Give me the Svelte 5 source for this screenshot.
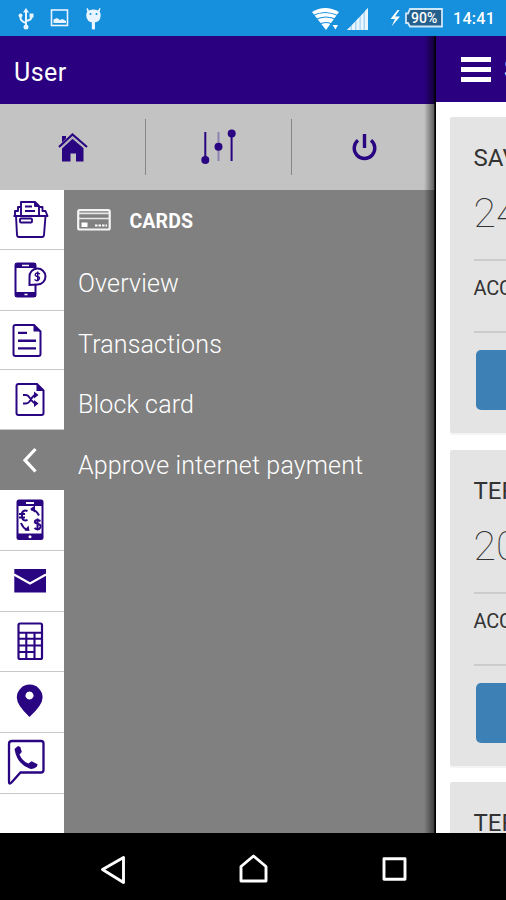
<script>
  const menu = ['Overview', 'Transactions', 'Block card', 'Approve internet payment'];
  const cards = [
    { title: 'SAVINGS', amount: '24' },
    { title: 'TERM', amount: '20' },
    { title: 'TERM', amount: '20' }
  ];
  const rail = [
    { id: 'folder', y: 190, h: 60 },
    { id: 'pay', y: 250, h: 61 },
    { id: 'doc', y: 311, h: 59 },
    { id: 'shuffle', y: 370, h: 60 },
    { id: 'back', y: 430, h: 60 },
    { id: 'exchange', y: 490, h: 61 },
    { id: 'mail', y: 551, h: 61 },
    { id: 'calc', y: 612, h: 60 },
    { id: 'pin', y: 672, h: 61 },
    { id: 'call', y: 733, h: 61 }
  ];
</script>

<div class="screen">
  <div class="status">
    <svg width="506" height="36" viewBox="0 0 506 36">
      <g stroke="#e8f4ff" fill="none" stroke-width="2">
        <path d="M26 11v16M20.500 15v3q0 3 5.500 5M31.500 15v2q0 3-5.500 4" />
        <rect x="51.500" y="10" width="16" height="15.500" stroke-width="1.600" />
      </g>
      <g fill="#e8f4ff">
        <path d="M26 8l3 4.500h-6z" /><circle cx="26" cy="27" r="2.500" />
        <circle cx="20.500" cy="15.500" r="2" /><rect x="29.500" y="13.500" width="4" height="4" />
        <path d="M53.500 23v-3.500l3.500-1.500 3 2 2.500-1 3.500 2v2z" />
        <path d="M87.500 8l1.500 2.500q4.500-2 9 0L99.500 8l1 .5-.8 3.200q1 1.800 1 3.800-.3 7-7.200 7-7-.2-7.300-7 0-2 1-3.800L86.500 8.500z" />
        <rect x="91.800" y="21" width="3.200" height="8.500" rx="1.200" />
      </g>
      <circle cx="90.500" cy="14" r="1" fill="#168fdc" /><circle cx="96.500" cy="14" r="1" fill="#168fdc" />
      <path d="M312 12q13-8 27 0L326 30z" fill="#fff" />
      <path d="M312 16q13-7 27 0M315 20q11-6 22 0M319 24.500q7-4 14 0" fill="none" stroke="#168fdc" stroke-width="1.200" />
      <path d="M331 23h9l-4.500 7.500z" fill="#168fdc" /><path d="M332.500 25h5.500l-2.500 4.500z" fill="#fff" />
      <path d="M347 30L368 8v22z" fill="#a9d5f5" />
      <path d="M347 30h3.500v-3.500zM352 30h3v-8l-3 3zM356.500 30h3V17l-3 3.500zM360.800 30h2.700V13l-2.700 3zM365 30h3V8l-3 3z" fill="#e9f5fd" />
      <path d="M397.500 10l-7 9h4.500l-3.500 7.500 8.500-10h-5l4.500-6.500z" fill="#fff" />
      <path d="M410 9h32v17.500h-32l-2-3.500h-2v-9.500h2z" fill="#25608c" stroke="#cce6fa" stroke-width="1.800" />
    </svg>
    <span class="pct">90%</span>
    <span class="time">14:41</span>
  </div>

  <div class="main">
    <div class="drawer">
      <header>User</header>
      <div class="tools">
        <div class="tool">
          <svg width="145" height="86" viewBox="0 104 145 86">
            <path d="M62 136h4v2.500l-4 4zM62 147l10.500-9.500L83.500 147v14.500h-7.500v-8h-5.500v8H62z" fill="#2a0581" />
            <path d="M59 147l13.500-12.500L87 147" fill="none" stroke="#2a0581" stroke-width="2.200" />
            <path d="M60.500 149l12-10.800L85.500 149" fill="none" stroke="#c3c3c3" stroke-width="1.100" />
          </svg>
        </div>
        <i></i>
        <div class="tool">
          <svg width="145" height="86" viewBox="146 104 145 86">
            <g stroke="#2a0581" stroke-width="2"><path d="M205.300 132v28M231.600 133v28" /><path d="M218.500 132v29" stroke="#8f83ae" /></g>
            <g fill="#2a0581"><circle cx="205.300" cy="160" r="4" /><circle cx="218.500" cy="146.700" r="4" /><circle cx="231.700" cy="133.500" r="4" /></g>
          </svg>
        </div>
        <i></i>
        <div class="tool">
          <svg width="144" height="86" viewBox="292 104 144 86">
            <path d="M364.500 134v14M358 140.200a10.300 10.300 0 1 0 13 0" fill="none" stroke="#2a0581" stroke-width="3.400" />
          </svg>
        </div>
      </div>

      <div class="body">
        <nav>
          {#each rail as r}
            <div class="item" class:active={r.id === 'back'} style="height: {r.h}px">
              <svg width="64" height={r.h} viewBox="0 {r.y} 64 {r.h}">
                {#if r.id === 'folder'}
                  <g fill="none" stroke="#2a0581" stroke-width="1.900" stroke-linejoin="round">
                    <path d="M16 216l1 19q.2 2 2 2h23q1.800 0 2-2l1.500-19zM13.500 216h34l-2-5h-3v-4h-3M15 216v-5h3v-4h3v8M21 215v-13h14l4 4v9M35 202v4h4" />
                    <rect x="20" y="218.500" width="12" height="4" rx="1" />
                    <path d="M25 206.500h7M25 211h10" />
                  </g>
                {:else if r.id === 'pay'}
                  <rect x="15.500" y="263.500" width="20" height="33" rx="2" fill="#fff" stroke="#2a0581" stroke-width="2" />
                  <path d="M15 263h21v5H15zM15 292h21v5H15z" fill="#2a0581" />
                  <path d="M22 265.500h7M24.500 294.500h3" stroke="#fff" stroke-width="1.300" />
                  <path d="M29.500 285v-8a8 8 0 1 1 8 7.500z" fill="#fff" stroke="#2a0581" stroke-width="2" />
                  <path d="M40 274q-3.500-2-4.500 0t2 2.500 1.500 3-4.500 0M37.700 271.500v10" fill="none" stroke="#2a0581" stroke-width="1.400" />
                {:else if r.id === 'doc'}
                  <path d="M15.500 325h18.500l6.500 6.500v22.500q0 2-2 2h-23q-2 0-2-2v-27q0-2 2-2z" fill="none" stroke="#2a0581" stroke-width="2" />
                  <path d="M33.500 324.500v7h7zM18 331.700h9v2.400h-9zM18 339.500h18v2.400H18zM18 347.200h18v2.400H18z" fill="#2a0581" />
                {:else if r.id === 'shuffle'}
                  <path d="M18.500 384H37l6.500 6.500v22.500q0 2-2 2h-23q-2 0-2-2v-27q0-2 2-2z" fill="none" stroke="#2a0581" stroke-width="2" />
                  <path d="M36.500 383.500v7.500h7z" fill="#2a0581" />
                  <path d="M23 395h3q2 0 3.500 2.500l3 4q1.500 2 4 2M23 403.500h3q2 0 3.500-2l3-4.500q1.500-2 4-2" fill="none" stroke="#2a0581" stroke-width="2" />
                  <path d="M34 391.500l4.500 3.500-4.500 3.500zM34 400l4.500 3.500-4.500 3.500z" fill="#2a0581" />
                {:else if r.id === 'back'}
                  <path d="M35.500 449l-10.500 11.200L35.500 471.500" fill="none" stroke="#fff" stroke-width="3.200" />
                {:else if r.id === 'exchange'}
                  <rect x="16.500" y="499.500" width="27" height="40.500" rx="2.500" fill="#2a0581" />
                  <rect x="18.500" y="506" width="23" height="27.500" fill="#fff" />
                  <path d="M26 503h8" stroke="#fff" stroke-width="2" /><circle cx="30" cy="536.700" r="1.500" fill="#fff" />
                  <g fill="none" stroke="#2a0581" stroke-width="2">
                    <path d="M27.500 511q-4-1.500-5.500 2v4.500q1 4 5.500 2.500M19 514h6M19 517.500h6" />
                    <path d="M40.500 521q-4.500-2-5.500 0t3 3 2 4-5.500 0M37.500 518.500v11.500M31 509.500q5 0 8 6M21 523q2 5 6 7" />
                  </g>
                  <path d="M30 509l5-3.500v7zM29.500 531l-5-.5 4-5z" fill="#2a0581" />
                {:else if r.id === 'mail'}
                  <rect x="14.300" y="569" width="31.700" height="23.500" fill="#2a0581" />
                  <path d="M14 574.500l16 9 16-9" fill="none" stroke="#fff" stroke-width="2.200" />
                {:else if r.id === 'calc'}
                  <rect x="18.500" y="623.500" width="23.500" height="35.500" rx="1.500" fill="none" stroke="#2a0581" stroke-width="2.200" />
                  <path d="M18 632.700h24M18 638.800h24M18 645.500h24M18 652h17M26.300 633v26M34.500 633v26" fill="none" stroke="#2a0581" stroke-width="2.100" />
                {:else if r.id === 'pin'}
                  <path fill-rule="evenodd" d="M29.500 717q-12.700-12-12.700-19.500a12.900 12.900 0 0 1 25.800 0q0 7.500-13.100 19.500zM29.500 691.500a4 4 0 1 0 .01 0z" fill="#2a0581" />
                {:else}
                  <path d="M12 741h29q2.500 0 2.500 2.500v26.500q0 2.500-2.500 2.500H20.500l-9 10q-2.500 2.500-2.500-1V744q0-3 3-3z" fill="none" stroke="#2a0581" stroke-width="2.300" />
                  <path d="M14.500 749l3.500-3 2.300 1 1.500 5-2.300 2.500q3 7 9 9l3-2.300 6 3-.5 2.300q-3 3-7 2.300-13-4.500-15.500-19.800z" fill="#2a0581" />
                {/if}
              </svg>
            </div>
          {/each}
        </nav>
        <section>
          <div class="heading">
            <svg width="34" height="22" viewBox="0 0 34 22">
              <rect x="1.200" y="1.200" width="31.500" height="19.300" rx="1.500" fill="none" stroke="#f4f4f4" stroke-width="2.200" />
              <path d="M2 4.300h30M2 9.500h30" stroke="#e6e6e6" stroke-width="1.700" />
              <rect x="4.500" y="13.500" width="6" height="4.500" fill="#fff" />
              <path d="M18 16.500h12" stroke="#fff" stroke-width="2" stroke-dasharray="2.500 1" />
            </svg>
            <b>CARDS</b>
          </div>
          {#each menu as m}<div class="link">{m}</div>{/each}
        </section>
      </div>
    </div>

    <div class="page">
      <div class="bar"><div class="burger"><i></i><i></i><i></i></div><span>SAVINGS</span></div>
      <div class="cards">
        {#each cards as c}
          <article>
            <div class="title">{c.title}</div>
            <div class="amount">{c.amount}</div>
            <div class="acc">ACCOUNT</div>
            <div class="btn"></div>
          </article>
        {/each}
      </div>
    </div>
  </div>

  <footer>
    <svg width="506" height="67" viewBox="0 833 506 67">
      <g fill="none" stroke="#fff" stroke-width="2.900" stroke-linejoin="round">
        <path d="M123.500 857.500v25L102.500 869.500z" /><path d="M241 866.500l12.500-10.500L266 866.500v14.500h-25z" />
        <rect x="384" y="858.800" width="21" height="20.500" />
      </g>
    </svg>
  </footer>
</div>

<style>
  .screen { width: 506px; height: 900px; overflow: hidden; display: flex; flex-direction: column; font-family: Roboto, sans-serif; background: #fff; }
  svg { display: block; flex: none; }
  .status { height: 36px; flex: none; position: relative; background: #168fdc; color: #fff; }
  .pct, .time { position: absolute; top: 0; line-height: 36px; white-space: nowrap; }
  .pct { left: 411px; font-size: 14px; font-weight: 500; letter-spacing: 0; }
  .time { left: 453px; top: 1px; font-size: 16px; font-weight: 500; letter-spacing: .3px; }
  .main { height: 797px; flex: none; display: flex; overflow: hidden; }
  .drawer { width: 436px; flex: none; position: relative; display: flex; flex-direction: column; }
  .drawer::after { content: ''; position: absolute; right: 0; top: 0; bottom: 0; width: 12px; background: linear-gradient(90deg, transparent, rgba(0,0,0,.22) 35%, rgba(0,0,0,.5) 82%, #000 90%); }
  header { height: 68px; flex: none; box-sizing: border-box; padding: 1px 0 0 14px; background: #2a0080; color: #fff; font-size: 25px; line-height: 71px; letter-spacing: .5px; }
  .tools { height: 86px; flex: none; display: flex; background: #c3c3c3; }
  .tool { width: 145px; flex: none; overflow: hidden; }
  .tool:last-child { width: 144px; }
  .tools > i { width: 1px; flex: none; height: 56px; margin-top: 15px; background: #868686; }
  .body { flex: 1; display: flex; min-height: 0; background: #808080; }
  nav { width: 64px; flex: none; background: #fff; }
  .item { box-sizing: border-box; border-bottom: 1.500px solid #c8c8c8; overflow: hidden; }
  .item.active { background: #808080; border-color: #808080; }
  section { flex: 1; padding-left: 14px; color: #fff; }
  .heading { height: 62px; display: flex; align-items: center; gap: 18.500px; margin-left: -1px; }
  .heading svg { margin-top: -2px; }
  .heading b { font-size: 19.500px; font-weight: 700; letter-spacing: .1px; }
  .link { height: 60.500px; line-height: 63px; font-size: 25px; font-weight: 300; letter-spacing: .15px; white-space: nowrap; }
  .page { width: 70px; flex: none; overflow: hidden; background: #fff; }
  .bar { height: 66px; display: flex; align-items: center; padding-left: 25px; gap: 13px; background: #2a0080; color: #fff; font-size: 25px; }
  .burger { display: flex; flex-direction: column; gap: 5px; width: 30px; flex: none; }
  .burger i { height: 5px; background: #fff; }
  .cards { padding: 15px 0 0 14px; display: flex; flex-direction: column; gap: 16.500px; }
  article { height: 316px; flex: none; box-sizing: border-box; width: 260px; padding-left: 23.500px; background: #e4e4e4; box-shadow: 0 2px 1px #f3f3f3; border-radius: 2px; color: #333; }
  .title { height: 65px; line-height: 83px; font-size: 24px; letter-spacing: 0; }
  .amount { height: 77px; line-height: 63px; font-size: 41px; font-weight: 100; border-bottom: 2px solid #ccc; }
  .acc { height: 70px; line-height: 54px; font-size: 20px; letter-spacing: -.2px; border-bottom: 2px solid #ccc; }
  .btn { margin: 17px 0 0 2.500px; height: 60px; border-radius: 5px; background: #3d80b6; }
  footer { height: 67px; flex: none; background: #000; }
</style>
